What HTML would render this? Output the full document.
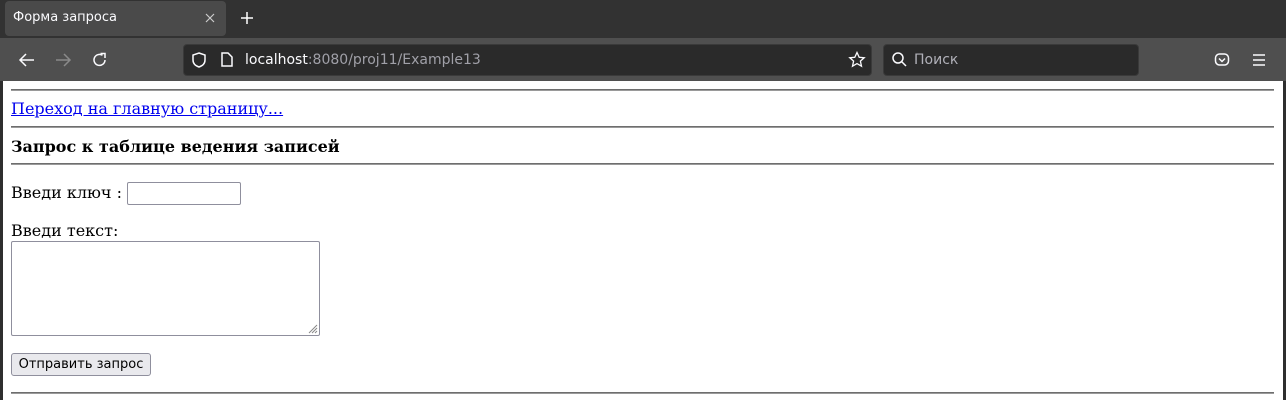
<!DOCTYPE html>
<html><head><meta charset="utf-8"><style>
body{margin:0;width:1286px;height:400px;overflow:hidden;background:#2e2e2e;font-family:"Liberation Sans","DejaVu Sans",sans-serif;position:relative}
.a{position:absolute}
.hr{position:absolute;left:11px;width:1263px;height:1px;background:#6e6e6e;border-bottom:1px solid #9a9a9a}
.s{font-family:"DejaVu Serif","Liberation Serif",serif;font-size:16px;color:#000}
</style></head><body>
<div class="a" style="left:0;top:0;width:1286px;height:38px;background:#323232"></div>
<div class="a" style="left:5px;top:1px;width:221px;height:35px;background:#4a4a4a;border-radius:4px"></div>
<div class="a" style="left:13px;top:10px;font-size:13px;color:#fbfbfe;font-family:'DejaVu Sans',sans-serif">Форма запроса</div>
<svg class="a" style="left:205px;top:13px" width="10" height="10"><path d="M1 1L9 9M9 1L1 9" stroke="#ccc" stroke-width="1.2"/></svg>
<svg class="a" style="left:240px;top:11px" width="14" height="14"><path d="M7 1V13M1 7H13" stroke="#fff" stroke-width="1.5"/></svg>
<div class="a" style="left:0;top:38px;width:1286px;height:43px;background:#4f4f4f"></div>
<svg class="a" style="left:18px;top:52px" width="18" height="16"><path d="M2 8H16M8 2L2 8L8 14" fill="none" stroke="#fbfbfe" stroke-width="1.5"/></svg>
<svg class="a" style="left:54px;top:52px" width="18" height="16"><path d="M2 8H16M10 2L16 8L10 14" fill="none" stroke="#8a8a8a" stroke-width="1.5"/></svg>
<svg class="a" style="left:91px;top:51px" width="18" height="18"><path d="M14 9A5.5 5.5 0 1 1 11.5 4.3" fill="none" stroke="#fbfbfe" stroke-width="1.5"/><path d="M9.5 2.5H14V7" fill="none" stroke="#fbfbfe" stroke-width="1.5"/></svg>
<div class="a" style="left:183px;top:44px;width:689px;height:32px;background:#2a2a2a;border-radius:4px;border:1px solid #3a3a3a;box-sizing:border-box"></div>
<svg class="a" style="left:190px;top:51px" width="18" height="18"><path d="M9 2 L15 4 V9 C15 13 12 15 9 16 C6 15 3 13 3 9 V4 Z" fill="none" stroke="#fbfbfe" stroke-width="1.5"/></svg>
<svg class="a" style="left:220px;top:51px" width="14" height="18"><path d="M2 2 H8 L12 6 V15 H2 Z" fill="none" stroke="#fbfbfe" stroke-width="1.5"/></svg>
<div class="a" style="left:245px;top:52px;font-size:14px;color:#fbfbfe;font-family:'DejaVu Sans',sans-serif">localhost<span style="color:#a0a0a8">:8080/proj11/Example13</span></div>
<svg class="a" style="left:848px;top:51px" width="18" height="18"><path d="M9 1.5L11.2 6.3L16.2 6.8L12.4 10.1L13.5 15.2L9 12.6L4.5 15.2L5.6 10.1L1.8 6.8L6.8 6.3Z" fill="none" stroke="#fbfbfe" stroke-width="1.3"/></svg>
<div class="a" style="left:883px;top:44px;width:256px;height:32px;background:#2a2a2a;border-radius:4px;border:1px solid #3a3a3a;box-sizing:border-box"></div>
<svg class="a" style="left:891px;top:51px" width="16" height="16"><circle cx="7" cy="7" r="5" fill="none" stroke="#fbfbfe" stroke-width="1.5"/><path d="M10.5 10.5 L15 15" stroke="#fbfbfe" stroke-width="1.5"/></svg>
<div class="a" style="left:914px;top:52px;font-size:14px;color:#b0b0b8;font-family:'DejaVu Sans',sans-serif">Поиск</div>
<svg class="a" style="left:1214px;top:52px" width="16" height="16"><rect x="1.5" y="2" width="13" height="11" rx="4" fill="none" stroke="#fbfbfe" stroke-width="1.5"/><path d="M5 6.5 L8 9.5 L11 6.5" fill="none" stroke="#fbfbfe" stroke-width="1.5"/></svg>
<svg class="a" style="left:1252px;top:53px" width="14" height="14"><path d="M1 2H13M1 7H13M1 12H13" stroke="#fbfbfe" stroke-width="1.5"/></svg>
<div class="a" style="left:3px;top:81px;width:1280px;height:319px;background:#fff"></div>
<div class="hr" style="top:89px"></div>
<div class="a s" style="left:11px;top:99px;color:#0000ee;text-decoration:underline">Переход на главную страницу...</div>
<div class="hr" style="top:126px"></div>
<div class="a s" style="left:11px;top:137px;font-weight:bold">Запрос к таблице ведения записей</div>
<div class="hr" style="top:163px"></div>
<div class="a s" style="left:11px;top:183px">Введи ключ :</div>
<div class="a" style="left:127px;top:182px;width:114px;height:23px;border:1px solid #8f8f9d;border-radius:2px;box-sizing:border-box"></div>
<div class="a s" style="left:11px;top:221px">Введи текст:</div>
<div class="a" style="left:11px;top:241px;width:309px;height:95px;border:1px solid #8f8f9d;border-radius:2px;box-sizing:border-box"></div>
<svg class="a" style="left:308px;top:324px" width="10" height="10"><path d="M9 1L1 9M9 4L4 9M9 7L7 9" stroke="#888" stroke-width="1"/></svg>
<div class="a" style="left:11px;top:353px;width:140px;height:23px;background:#e9e9ed;border:1px solid #8f8f9d;border-radius:3px;box-sizing:border-box;font-size:13px;font-family:'DejaVu Sans',sans-serif;line-height:21px;text-align:center">Отправить запрос</div>
<div class="hr" style="top:392px"></div>
</body></html>
